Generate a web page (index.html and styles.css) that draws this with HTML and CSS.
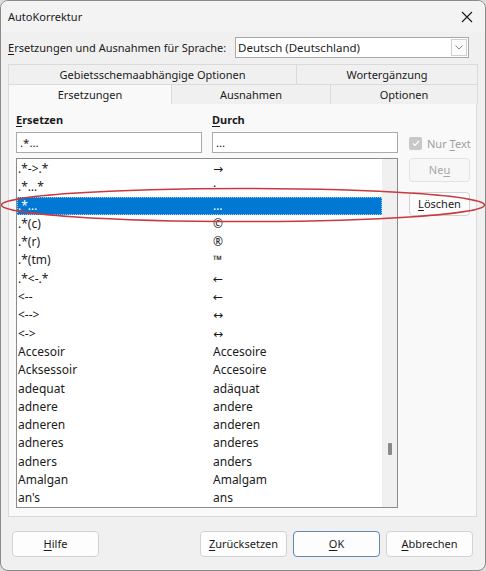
FILE: index.html
```html
<!DOCTYPE html>
<html lang="de">
<head>
<meta charset="utf-8">
<link rel="stylesheet" href="styles.css">
</head>
<body>
<div class="window">
  <div class="titlebar">
    <span class="title">AutoKorrektur</span>
    <svg class="close" width="12" height="12" viewBox="0 0 12 12"><path d="M1 1L11 11M11 1L1 11" stroke="#1a1a1a" stroke-width="1.1" fill="none"/></svg>
  </div>
  <div class="lang-row">
    <span class="lang-label"><u>E</u>rsetzungen und Ausnahmen für Sprache:</span>
    <div class="combo">
      <span class="combo-text">Deutsch (Deutschland)</span>
      <span class="combo-btn"><svg width="8" height="5" viewBox="0 0 8 5"><path d="M0.5 0.5L4 4L7.5 0.5" stroke="#777" fill="none" stroke-width="0.9"/></svg></span>
    </div>
  </div>
  <div class="tabs">
    <div class="tab-row">
      <div class="tab t-geb">Gebietsschemaabhängige Optionen</div>
      <div class="tab t-wort">Wortergänzung</div>
    </div>
    <div class="tab-row">
      <div class="tab t-ers active">Ersetzungen</div>
      <div class="tab t-aus">Ausnahmen</div>
      <div class="tab t-opt">Optionen</div>
    </div>
  </div>
  <div class="panel">
    <div class="lbl"><u>E</u>rsetzen</div>
    <div class="lbl"><u>D</u>urch</div>
    <div></div>
    <div class="input">.*…</div>
    <div class="input">…</div>
    <div class="check-wrap">
      <span class="checkbox"><svg width="8" height="7" viewBox="0 0 8 7"><path d="M1 3.5L3 5.5L7 1" stroke="#fff" stroke-width="1.2" fill="none"/></svg></span>
      <span class="check-label">Nur <u>T</u>ext</span>
    </div>
    <div class="list">
      <div class="rows">
        <div class="row"><span>.*-&gt;.*</span><span class="sym">→</span></div>
        <div class="row"><span>.*…*</span><span>·</span></div>
        <div class="row sel"><span>.*…</span><span>…</span></div>
        <div class="row"><span>.*(c)</span><span>©</span></div>
        <div class="row"><span>.*(r)</span><span>®</span></div>
        <div class="row"><span>.*(tm)</span><span>™</span></div>
        <div class="row"><span>.*&lt;-.*</span><span class="sym">←</span></div>
        <div class="row"><span>&lt;--</span><span class="sym">←</span></div>
        <div class="row"><span>&lt;--&gt;</span><span class="sym">↔</span></div>
        <div class="row"><span>&lt;-&gt;</span><span class="sym">↔</span></div>
        <div class="row"><span>Accesoir</span><span>Accesoire</span></div>
        <div class="row"><span>Acksessoir</span><span>Accesoire</span></div>
        <div class="row"><span>adequat</span><span>adäquat</span></div>
        <div class="row"><span>adnere</span><span>andere</span></div>
        <div class="row"><span>adneren</span><span>anderen</span></div>
        <div class="row"><span>adneres</span><span>anderes</span></div>
        <div class="row"><span>adners</span><span>anders</span></div>
        <div class="row"><span>Amalgan</span><span>Amalgam</span></div>
        <div class="row"><span>an's</span><span>ans</span></div>
      </div>
      <div class="scrollbar"><div class="thumb"></div></div>
    </div>
    <div class="side">
      <div class="btn small disabled">Ne<u>u</u></div>
      <div class="btn small"><u>L</u>öschen</div>
    </div>
  </div>
  <div class="footer">
    <div class="btn foot"><u>H</u>ilfe</div>
    <div class="foot-right">
      <div class="btn foot"><u>Z</u>urücksetzen</div>
      <div class="btn foot default"><u>O</u>K</div>
      <div class="btn foot"><u>A</u>bbrechen</div>
    </div>
  </div>
  <svg class="annot" width="486" height="571" viewBox="0 0 486 571"><ellipse cx="243" cy="205" rx="241.5" ry="16.5" fill="none" stroke="#c9393f" stroke-width="1.5"/></svg>
</div>
</body>
</html>
```
FILE: styles.css
```css
* { box-sizing: border-box; }
html, body { margin: 0; padding: 0; background: #dcdcdc; }
body { font-family: "Noto Sans", "Open Sans", sans-serif; font-size: 11px; color: #1b1b1b; }
u { text-decoration: underline; text-underline-offset: 2px; text-decoration-thickness: 1px; }
.window {
  position: relative;
  width: 486px; height: 571px;
  background: #f0f0f0;
  border: 1px solid #8a8a8a;
  border-radius: 8px;
  overflow: hidden;
}
.titlebar {
  height: 31px;
  display: flex; align-items: center; justify-content: space-between;
  padding: 0 12px 0 7px;
  background: #f3f3f3;
}
.title { font-size: 11px; }
.lang-row {
  display: flex; align-items: center;
  height: 21px; margin-top: 5px;
  padding-left: 7px;
}
.lang-label { width: 227px; flex-shrink: 0; white-space: nowrap; }
.combo {
  width: 234px; height: 21px; flex-shrink: 0;
  background: #fff;
  border: 1px solid #a8a8a8;
  display: flex; align-items: center; justify-content: space-between;
  font-size: 11.5px;
}
.combo-text { padding-left: 2px; }
.combo-btn {
  width: 16px; height: 17px; margin-right: 1px;
  border: 1px solid #d0d0d0; background: #fbfbfb;
  display: flex; align-items: center; justify-content: center;
}
.tabs { margin: 6px 0 0 7px; width: 469px; }
.tab-row { display: flex; height: 20px; }
.tab {
  height: 20px; line-height: 19px; text-align: center;
  background: #f0f0f0;
  border: 1px solid #dadada; border-bottom: none;
  margin-right: -1px;
  white-space: nowrap;
}
.t-geb { width: 289px; }
.t-wort { width: 182px; }
.t-ers { width: 164px; }
.t-aus { width: 160px; }
.t-opt { width: 148px; }
.tab.active { background: #f9f9f9; }
.panel {
  margin-left: 7px;
  width: 469px; height: 413px;
  background: #f9f9f9;
  border: 1px solid #dadada; border-top: none;
  display: grid;
  grid-template-columns: 186px 186px 62px;
  grid-template-rows: 17px 21px 350px;
  column-gap: 10px;
  row-gap: 5px;
  padding: 6px 0 0 7px;
  align-content: start;
}
.lbl { font-weight: bold; line-height: 16px; padding-top: 2px; font-size: 11px; }
.input {
  background: #fff; border: 1px solid #ababab;
  height: 21px; line-height: 19px; padding-left: 3px; font-size: 11.5px;
}
.check-wrap { display: flex; align-items: center; gap: 5px; margin-left: 1px; color: #a0a0a0; margin-top: 1px; white-space: nowrap; }
.checkbox {
  width: 13px; height: 13px; background: #c8c8c8; border-radius: 2px; flex-shrink: 0;
  display: flex; align-items: center; justify-content: center;
}
.list {
  grid-column: 1 / 3;
  width: 382px;
  background: #fff;
  border: 1px solid #8c8c8c;
  display: flex;
  padding: 1px 0 0 0;
  overflow: hidden;
}
.rows { flex: 1; }
.row {
  height: 18.3px; line-height: 18px;
  display: grid; grid-template-columns: 195px 1fr;
  padding-left: 1px; font-size: 12px;
  white-space: nowrap;
}
.sym { font-family: "DejaVu Sans", sans-serif; font-size: 12px; }
.row.sel { background: #0078d4; color: #fff; outline: 1px dotted #9cc7ee; outline-offset: -1px; }
.scrollbar { width: 15px; background: #f0f0f0; position: relative; margin-top: -1px; }
.thumb { position: absolute; left: 6px; top: 284px; width: 4px; height: 12px; background: #8a8a8a; border-radius: 1px; }
.side { grid-column: 3; margin-left: 1px; display: flex; flex-direction: column; gap: 10px; }
.btn {
  background: #fdfdfd;
  border: 1px solid #d2d2d2;
  border-radius: 4px;
  text-align: center;
}
.btn.small { height: 24px; line-height: 22px; }
.btn.disabled { color: #a8a8a8; background: #f7f7f7; border-color: #e2e2e2; }
.footer {
  display: flex; justify-content: space-between;
  padding: 0 12px 0 11px;
  margin-top: 14px;
}
.foot-right { display: flex; gap: 6px; }
.btn.foot { width: 87px; height: 26px; line-height: 24px; }
.btn.default { border-color: #5d89b3; }
.annot { position: absolute; left: -1px; top: -1px; pointer-events: none; }
```
